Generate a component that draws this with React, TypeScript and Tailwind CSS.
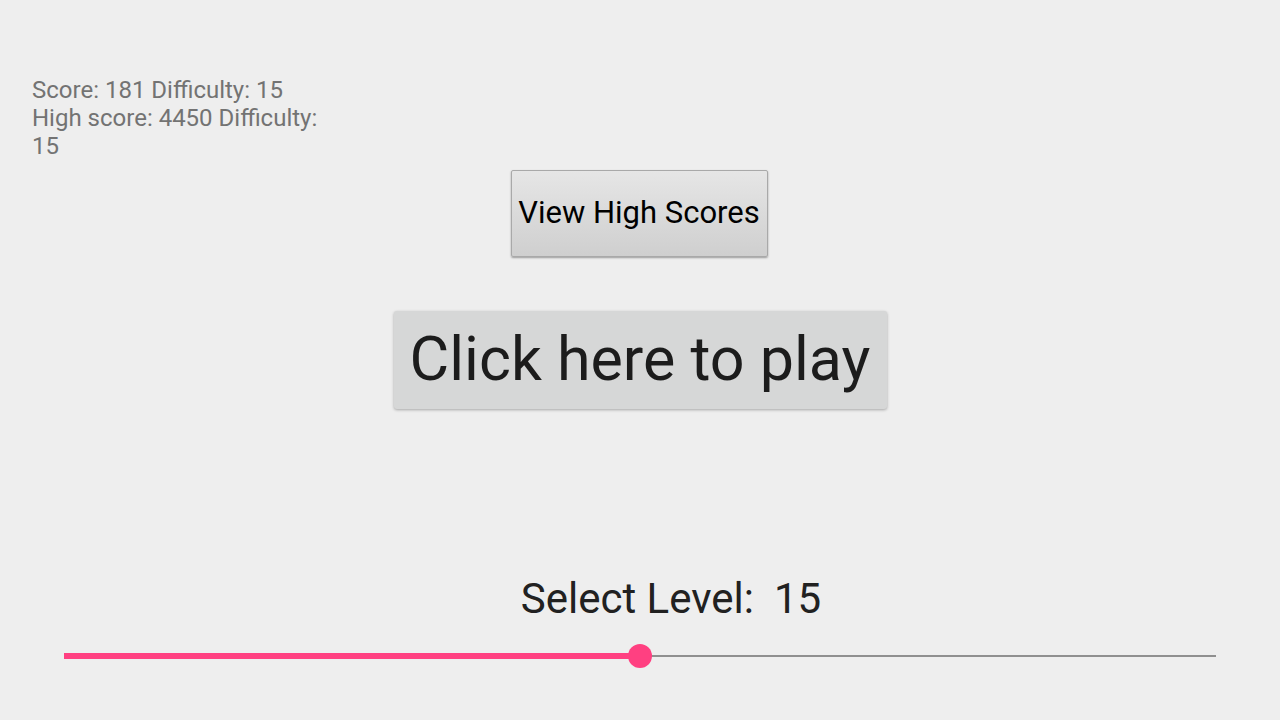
import React, { useState } from 'react'

const App: React.FC = () => {
  const [level, setLevel] = useState(15)
  const max = 30
  const pct = (level / max) * 100

  return (
    <div
      className="flex h-[720px] w-[1280px] flex-col bg-[#eeeeee] text-[#212121]"
      style={{ fontFamily: 'Roboto, "Noto Sans", sans-serif' }}
    >
      <div className="ml-8 mt-[76px] w-[300px] text-[24px] leading-[28px] text-[#737373]">
        <p>Score: 181 Difficulty: 15</p>
        <p>High score: 4450 Difficulty: 15</p>
      </div>

      <div className="mt-[10px] flex justify-center">
        <button className="ml-[-2px] h-[87px] w-[257px] rounded-[2px] border border-[#a9a9a9] bg-gradient-to-b from-[#e6e6e6] to-[#cfcfcf] text-[31px] text-black shadow-[0_1px_2px_rgba(0,0,0,0.35)]">
          View High Scores
        </button>
      </div>

      <div className="mt-[54px] flex justify-center">
        <button className="h-[98px] w-[493px] rounded-[3px] bg-[#d6d7d7] text-[61px] text-[#1c1c1c] shadow-[0_1px_3px_rgba(0,0,0,0.3)]">
          Click here to play
        </button>
      </div>

      <div className="mt-[169px] flex justify-center pl-[62px] text-[42px] leading-none">
        <span>Select Level:</span>
        <span className="ml-[20px]">{level}</span>
      </div>

      <div className="relative mx-[64px] mt-[24px] h-[24px]">
        <div className="absolute left-0 right-0 top-[11px] h-[2px] bg-[#8f8f8f]" />
        <div
          className="absolute left-0 top-[9px] h-[6px] bg-[#ff4081]"
          style={{ width: `${pct}%` }}
        />
        <div
          className="absolute top-0 h-[24px] w-[24px] -translate-x-1/2 rounded-full bg-[#ff4081]"
          style={{ left: `${pct}%` }}
        />
        <input
          type="range"
          min={0}
          max={max}
          value={level}
          onChange={(e) => setLevel(Number(e.target.value))}
          className="absolute inset-0 h-full w-full cursor-pointer opacity-0"
        />
      </div>
    </div>
  )
}

export default App
